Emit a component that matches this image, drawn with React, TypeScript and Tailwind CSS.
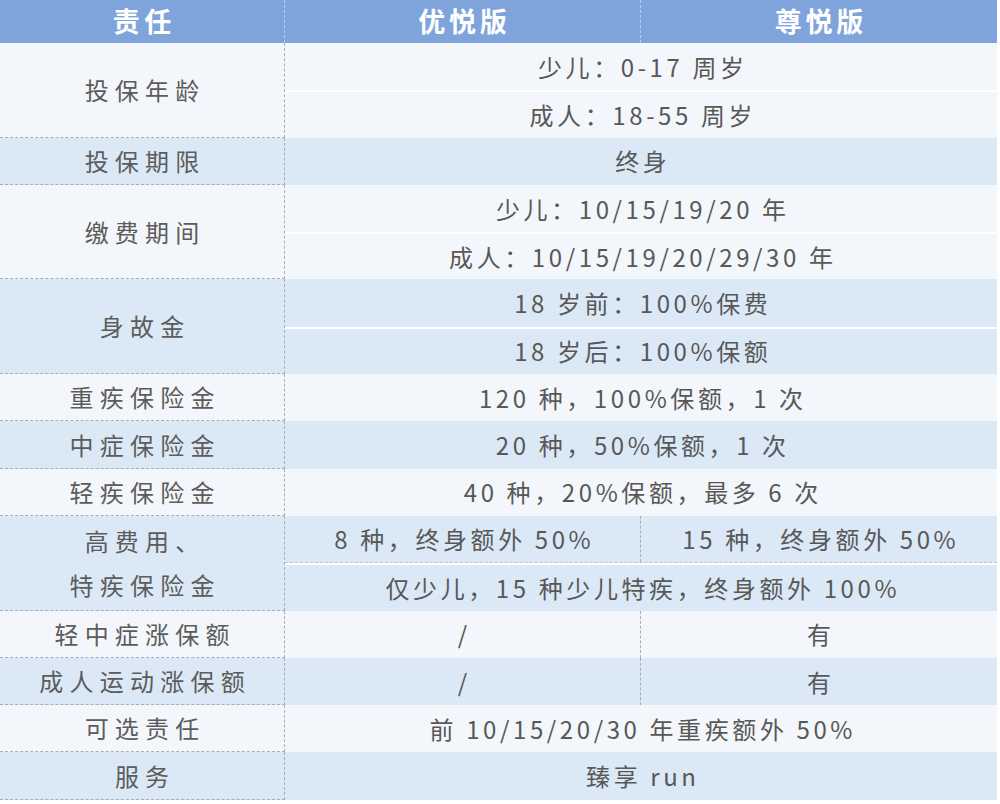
const FONT = { fontFamily: '"Noto Sans CJK SC", "Liberation Sans", sans-serif' };

type Cell = { text: string; span?: boolean; second?: string };
type Row = { label: string[]; sub: Cell[]; blue: boolean };

const ROWS: Row[] = [
  { label: ['投保年龄'], blue: false, sub: [{ text: '少儿：0-17 周岁', span: true }, { text: '成人：18-55 周岁', span: true }] },
  { label: ['投保期限'], blue: true, sub: [{ text: '终身', span: true }] },
  { label: ['缴费期间'], blue: false, sub: [{ text: '少儿：10/15/19/20 年', span: true }, { text: '成人：10/15/19/20/29/30 年', span: true }] },
  { label: ['身故金'], blue: true, sub: [{ text: '18 岁前：100%保费', span: true }, { text: '18 岁后：100%保额', span: true }] },
  { label: ['重疾保险金'], blue: false, sub: [{ text: '120 种，100%保额，1 次', span: true }] },
  { label: ['中症保险金'], blue: true, sub: [{ text: '20 种，50%保额，1 次', span: true }] },
  { label: ['轻疾保险金'], blue: false, sub: [{ text: '40 种，20%保额，最多 6 次', span: true }] },
  { label: ['高费用、', '特疾保险金'], blue: true, sub: [{ text: '8 种，终身额外 50%', second: '15 种，终身额外 50%' }, { text: '仅少儿，15 种少儿特疾，终身额外 100%', span: true }] },
  { label: ['轻中症涨保额'], blue: false, sub: [{ text: '/', second: '有' }] },
  { label: ['成人运动涨保额'], blue: true, sub: [{ text: '/', second: '有' }] },
  { label: ['可选责任'], blue: false, sub: [{ text: '前 10/15/20/30 年重疾额外 50%', span: true }] },
  { label: ['服务'], blue: true, sub: [{ text: '臻享 run', span: true }] },
];

export default function App() {
  return (
    <div className="w-[1000px] h-[804px] bg-white overflow-hidden" style={FONT}>
      <div className="w-[997px]">
        <div className="grid grid-cols-[285px_356px_356px] h-[43px] bg-[#7fa4dc] text-white text-[27px] font-bold">
          <div className="flex items-center justify-center tracking-[0.16em] pl-[0.16em] border-r border-dashed border-[#b9cdeb]">责任</div>
          <div className="flex items-center justify-center tracking-[0.14em] pl-[0.14em] border-r border-dashed border-[#b9cdeb]">优悦版</div>
          <div className="flex items-center justify-center tracking-[0.14em] pl-[0.14em]">尊悦版</div>
        </div>
        {ROWS.map((r, i) => (
          <div key={i} className={`grid grid-cols-[285px_712px] ${r.blue ? 'bg-[#dbe8f6]' : 'bg-[#f3f6fa]'}`}>
            <div className="flex flex-col items-center justify-center border-r border-b border-dashed border-[#a9adb3] text-[24px] text-[#5c5c5c] tracking-[0.26em] leading-[44px]">
              {r.label.map((l) => (
                <div key={l} className="pl-[0.26em]">{l}</div>
              ))}
            </div>
            <div className="flex flex-col">
              {r.sub.map((c, j) => (
                <div key={j} className={`h-[47.3px] flex text-[24px] text-[#585858] ${j > 0 ? 'border-t-2 border-white' : ''} ${i === 7 && j === 0 ? 'border-b border-dashed border-[#c0c4ca]' : ''}`}>
                  {c.span ? (
                    <div className="flex-1 flex items-center justify-center tracking-[0.15em] pl-[0.15em]">{c.text}</div>
                  ) : (
                    <>
                      <div className="w-[356px] flex items-center justify-center tracking-[0.15em] pl-[0.15em] border-r border-dashed border-[#a9adb3]">{c.text}</div>
                      <div className="flex-1 flex items-center justify-center tracking-[0.15em] pl-[0.15em]">{c.second}</div>
                    </>
                  )}
                </div>
              ))}
            </div>
          </div>
        ))}
      </div>
    </div>
  );
}
